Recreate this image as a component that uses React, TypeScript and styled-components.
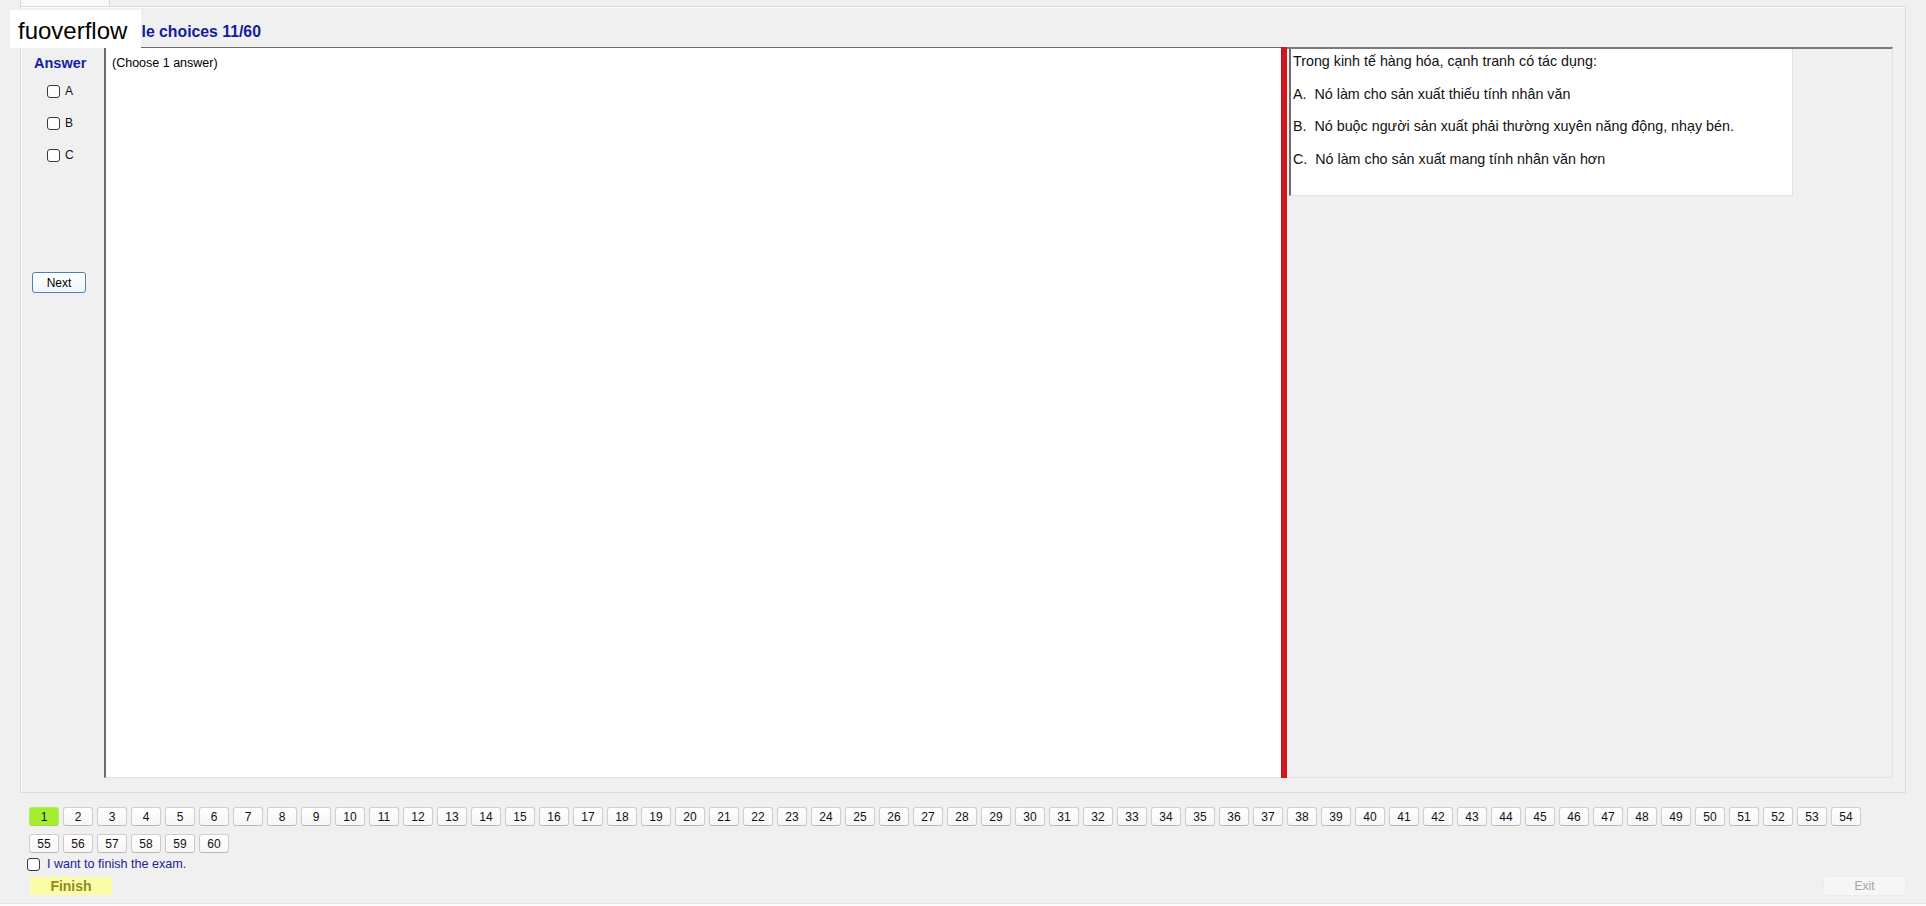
import React from 'react';
import styled, { createGlobalStyle } from 'styled-components';

const GlobalStyle = createGlobalStyle`
  html, body {
    margin: 0;
    padding: 0;
    background: #fbfbfb;
  }
  body {
    font-family: 'Liberation Sans', Arial, sans-serif;
    color: #000;
  }
`;

const StyledWindow = styled.div`
  position: relative;
  width: 1926px;
  height: 903px;
  background: #f0f0f0;
  overflow: hidden;
  border-bottom: 1px solid #e4e4e4;
`;

const StyledTabStrip = styled.div`
  height: 6px;
  padding-left: 20px;
`;

const StyledTab = styled.div`
  width: 90px;
  height: 6px;
  box-sizing: border-box;
  background: #f9f9f9;
  border: 1px solid #d9d9d9;
  border-top: none;
  border-bottom: none;
`;

const StyledGroupBox = styled.div`
  margin-left: 20px;
  width: 1886px;
  height: 787px;
  box-sizing: border-box;
  border: 1px solid #dcdcdc;
  box-shadow: inset 1px 1px 0 #fdfdfd;
  padding: 0 12px 14px 0;
`;

const StyledHeader = styled.div`
  height: 40px;
  box-sizing: border-box;
  display: flex;
  align-items: flex-end;
  padding: 0 0 6px 74px;
  font-size: 15.8px;
  line-height: 18px;
  font-weight: bold;
  color: #141c9e;
`;

const StyledBody = styled.div`
  display: flex;
  height: 731px;
`;

const StyledLeftPanel = styled.div`
  flex: 0 0 83px;
  display: flex;
  flex-direction: column;
  align-items: flex-start;
`;

const StyledAnswerLabel = styled.div`
  margin: 8px 0 0 13px;
  font-size: 14.5px;
  line-height: 17px;
  font-weight: bold;
  color: #161ca6;
`;

const StyledOptions = styled.div`
  margin: 3px 0 0 26px;
  display: flex;
  flex-direction: column;
`;

const StyledOption = styled.label`
  height: 32px;
  display: flex;
  align-items: center;
  gap: 5px;
  font-size: 12px;
  color: #111;
`;

const StyledCheckbox = styled.input.attrs({ type: 'checkbox' })`
  appearance: none;
  margin: 0;
  width: 13px;
  height: 13px;
  box-sizing: border-box;
  border: 1px solid #3a3a3a;
  border-radius: 3px;
  background: #fff;
`;

const StyledNextButton = styled.button`
  margin: 101px 0 0 11px;
  width: 54px;
  height: 21px;
  box-sizing: border-box;
  padding: 0;
  border: 1px solid #4f80b0;
  border-radius: 3px;
  background: linear-gradient(#ffffff, #eef6fc);
  font-family: inherit;
  font-size: 12px;
  color: #000;
`;

const StyledTextPane = styled.div`
  flex: 1;
  background: #fff;
  border-top: 1px solid #6a6a6a;
  border-left: 2px solid #6d6d6d;
  border-bottom: 1px solid #e2e2e2;
  padding: 8px 6px;
  font-size: 12.5px;
  line-height: 15px;
`;

const StyledSplitter = styled.div`
  flex: 0 0 6px;
  background: #d3171d;
  border-left: 1px solid #b81217;
  box-sizing: border-box;
`;

const StyledRightPanel = styled.div`
  flex: 0 0 606px;
  box-sizing: border-box;
  border-top: 2px solid #7b7b7b;
  border-right: 1px solid #e2e2e2;
  border-bottom: 1px solid #e2e2e2;
  padding-left: 2px;
`;

const StyledQuestionBox = styled.div`
  width: 504px;
  height: 147px;
  box-sizing: border-box;
  background: #fff;
  border-left: 2px solid #6d6d6d;
  border-right: 1px solid #e2e2e2;
  border-bottom: 1px solid #e2e2e2;
  padding: 3px 0 0 2px;
  font-size: 14.3px;
  line-height: 18px;
  color: #111;
`;

const StyledLine = styled.div`
  white-space: pre;
  margin-bottom: 14.5px;
`;

const StyledNav = styled.div`
  margin: 14px 0 0 29px;
  width: 1836px;
  display: flex;
  flex-wrap: wrap;
  gap: 8px 4px;
`;

const StyledNumButton = styled.button<{ $active?: boolean }>`
  width: 30px;
  height: 19px;
  box-sizing: border-box;
  padding: 0;
  border: 1px solid ${(p) => (p.$active ? '#b5e870' : '#cdcdcd')};
  border-bottom-color: ${(p) => (p.$active ? '#9ad44a' : '#b9b9b9')};
  border-radius: 3px;
  background: ${(p) => (p.$active ? '#a3ee2c' : 'linear-gradient(#ffffff, #f6f6f6)')};
  font-family: inherit;
  font-size: 12px;
  color: #111;
`;

const StyledFinishCheck = styled.label`
  margin: 3px 0 0 27px;
  height: 16px;
  display: flex;
  align-items: center;
  gap: 7px;
  font-size: 12.6px;
  color: #211d92;
`;

const StyledActionRow = styled.div`
  margin-top: 4px;
  height: 20px;
  display: flex;
  align-items: center;
  justify-content: space-between;
  padding: 0 20px 0 30px;
`;

const StyledFinishButton = styled.button`
  width: 82px;
  height: 18px;
  padding: 0;
  border: none;
  background: #fdfca9;
  font-family: inherit;
  font-size: 14px;
  font-weight: bold;
  color: #8e8d1c;
`;

const StyledExitButton = styled.button`
  width: 83px;
  height: 20px;
  padding: 0;
  border: 1px solid #ececec;
  border-radius: 3px;
  background: #f6f6f6;
  font-family: inherit;
  font-size: 12px;
  color: #a3a3a3;
`;

const StyledLogo = styled.div`
  position: absolute;
  left: 10px;
  top: 10px;
  width: 131px;
  height: 38px;
  box-sizing: border-box;
  background: #fff;
  padding: 2px 0 0 8px;
  font-size: 24px;
  line-height: 38px;
  color: #000;
`;

const answers = ['A', 'B', 'C'];

const questionLines = [
  'Trong kinh tế hàng hóa, cạnh tranh có tác dụng:',
  'A.  Nó làm cho sản xuất thiếu tính nhân văn',
  'B.  Nó buộc người sản xuất phải thường xuyên năng động, nhạy bén.',
  'C.  Nó làm cho sản xuất mang tính nhân văn hơn',
];

const questions = Array.from({ length: 60 }, (_, i) => i + 1);

export default function App() {
  return (
    <StyledWindow>
      <GlobalStyle />
      <StyledTabStrip>
        <StyledTab />
      </StyledTabStrip>
      <StyledGroupBox>
        <StyledHeader>Multiple choices 11/60</StyledHeader>
        <StyledBody>
          <StyledLeftPanel>
            <StyledAnswerLabel>Answer</StyledAnswerLabel>
            <StyledOptions>
              {answers.map((a) => (
                <StyledOption key={a}>
                  <StyledCheckbox />
                  {a}
                </StyledOption>
              ))}
            </StyledOptions>
            <StyledNextButton>Next</StyledNextButton>
          </StyledLeftPanel>
          <StyledTextPane>(Choose 1 answer)</StyledTextPane>
          <StyledSplitter />
          <StyledRightPanel>
            <StyledQuestionBox>
              {questionLines.map((line) => (
                <StyledLine key={line}>{line}</StyledLine>
              ))}
            </StyledQuestionBox>
          </StyledRightPanel>
        </StyledBody>
      </StyledGroupBox>
      <StyledNav>
        {questions.map((n) => (
          <StyledNumButton key={n} $active={n === 1}>
            {n}
          </StyledNumButton>
        ))}
      </StyledNav>
      <StyledFinishCheck>
        <StyledCheckbox />
        I want to finish the exam.
      </StyledFinishCheck>
      <StyledActionRow>
        <StyledFinishButton>Finish</StyledFinishButton>
        <StyledExitButton>Exit</StyledExitButton>
      </StyledActionRow>
      <StyledLogo>fuoverflow</StyledLogo>
    </StyledWindow>
  );
}
